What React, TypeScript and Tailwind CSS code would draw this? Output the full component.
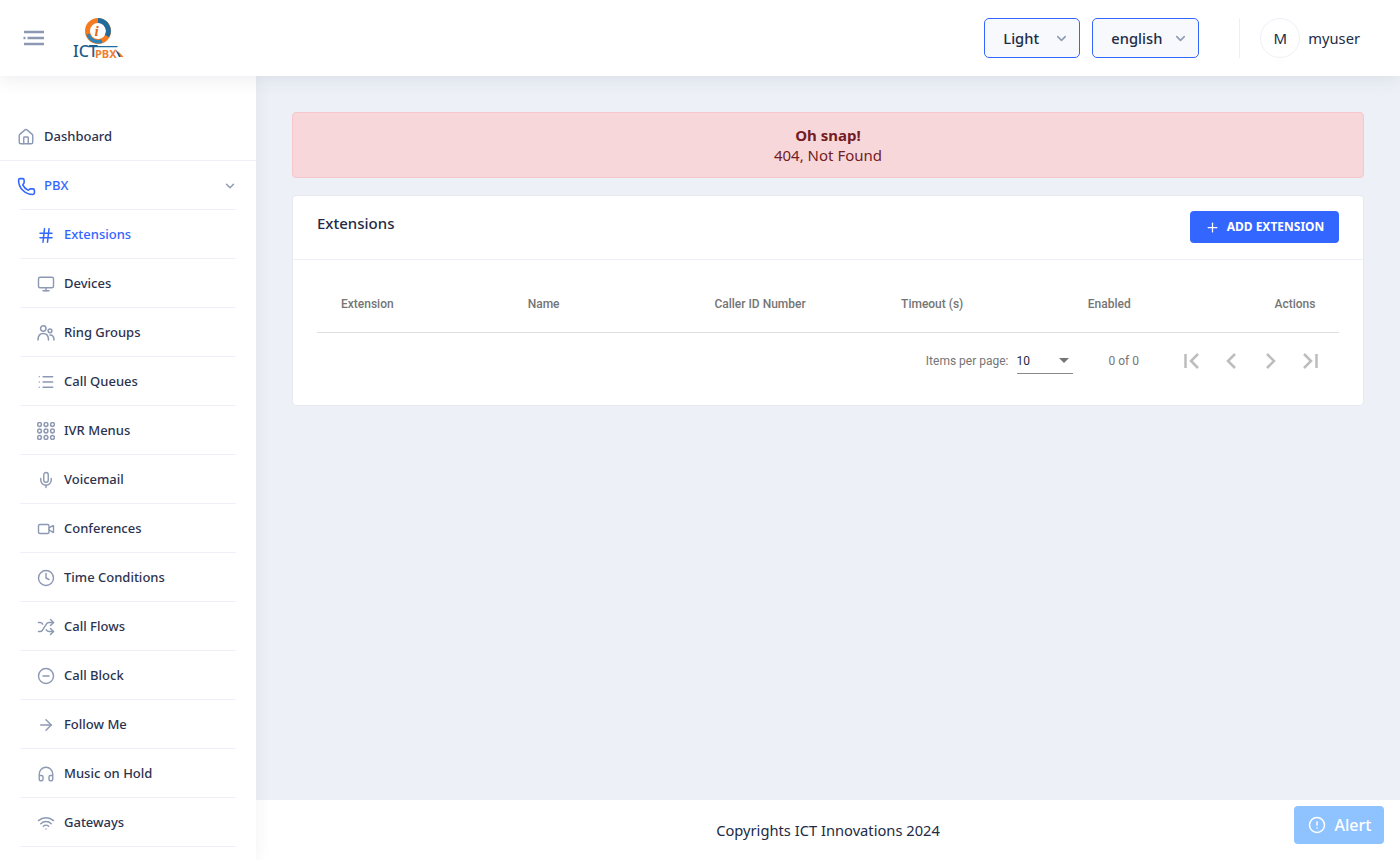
import React from "react";
import { House, Phone, ChevronDown, Hash, Monitor, List, Mic, Video, Clock, Shuffle, CircleMinus, ArrowRight, Headphones, Wifi, Plus, CircleAlert } from "lucide-react";

const Logo = () => (
  <div className="relative h-[44px] w-[52px]">
    <svg viewBox="0 0 52 44" width="52" height="44" className="absolute left-0 top-0">
      <circle cx="26" cy="15" r="10.500" fill="none" stroke="#f47b20" strokeWidth="5" />
      <path d="M26 4.500a10.500 10.500 0 0 1 9 15.500" fill="none" stroke="#1f6d9f" strokeWidth="5" />
      <path d="M16 18a10.500 10.500 0 0 0 14 7" fill="none" stroke="#2f83b5" strokeWidth="3.500" />
      <circle cx="26" cy="15" r="7.500" fill="#fff" />
      <path d="M16 30h30l-1 1.200H16z" fill="#1f6d9f" />
      <path d="M43 33l4 8h4z" fill="#1c4f7d" />
      <path d="M46 35l2.500 6h3z" fill="#f47b20" />
    </svg>
    <span className="absolute left-[22.500px] top-[7px] font-['Liberation_Serif',serif] text-[15px] font-bold italic leading-[16px] text-[#e2681a]">i</span>
    <span className="absolute left-[1px] top-[27px] font-['Noto_Sans',sans-serif] text-[16px] font-medium leading-[17px] text-[#1c5a8a]">ICT</span>
    <span className="absolute left-[23px] top-[32px] font-['Noto_Sans',sans-serif] text-[11px] font-bold leading-[12px] text-[#ef7d33]">PBX</span>
  </div>
);

const MenuIcon = () => (
  <svg width="22" height="16" viewBox="0 0 22 16" fill="none" stroke="#8d99b3" strokeWidth="2.400">
    <path d="M1 2h20M4.500 8h16.500M1 14h20" />
    <path d="M0.500 8h2" />
  </svg>
);

const UsersIcon = () => (
  <svg width="18" height="18" viewBox="0 0 18 18" fill="none" stroke="currentColor" strokeWidth="1.500" strokeLinecap="round">
    <circle cx="6.300" cy="4.500" r="2.700" />
    <circle cx="13" cy="6.800" r="1.900" />
    <path d="M1 16c0-4 2-6.500 5.300-6.500S11.500 12 11.500 16" />
    <path d="M13 11c2.500 0 4 2 4 5" />
  </svg>
);

const DotsIcon = () => (
  <svg width="18" height="18" viewBox="0 0 18 18" fill="none" stroke="currentColor" strokeWidth="1.500">
    {[2.500, 9, 15.500].map((y) =>
      [2.500, 9, 15.500].map((x) => <circle key={`${x}-${y}`} cx={x} cy={y} r="1.900" />)
    )}
  </svg>
);

const S = 1.900;

const items: [string, React.ReactNode][] = [
  ["Devices", <Monitor size={18} strokeWidth={S} />],
  ["Ring Groups", <UsersIcon />],
  ["Call Queues", <List size={18} strokeWidth={1.700} />],
  ["IVR Menus", <DotsIcon />],
  ["Voicemail", <Mic size={18} strokeWidth={S} />],
  ["Conferences", <Video size={18} strokeWidth={S} />],
  ["Time Conditions", <Clock size={18} strokeWidth={S} />],
  ["Call Flows", <Shuffle size={18} strokeWidth={S} />],
  ["Call Block", <CircleMinus size={18} strokeWidth={S} />],
  ["Follow Me", <ArrowRight size={18} strokeWidth={S} />],
  ["Music on Hold", <Headphones size={18} strokeWidth={S} />],
  ["Gateways", <Wifi size={18} strokeWidth={S} />],
];

const SubItem = ({ label, icon, active }: { label: string; icon: React.ReactNode; active?: boolean }) => (
  <div className={`flex h-[49px] shrink-0 items-center border-b border-[#edf0f8] pl-[17px] pt-[2px] ${active ? "text-[#3366ff]" : "text-[#2c3350]"}`}>
    <span className={`flex w-[18px] justify-center ${active ? "text-[#3366ff]" : "text-[#8d99b3]"}`}>{icon}</span>
    <span className="ml-[9px] text-[13px] font-[550]">{label}</span>
  </div>
);

const Select = ({ label, width }: { label: string; width: string }) => (
  <div className={`flex h-[40px] items-center justify-between rounded-[5px] border border-[#3366ff] bg-[#f7f9fc] pl-[18px] pr-[10px] ${width}`}>
    <span className="text-[14.700px] font-[550] text-[#222b45]">{label}</span>
    <ChevronDown size={15} strokeWidth={2.500} className="text-[#8f9bb3]" />
  </div>
);

const columns = ["Extension", "Name", "Caller ID Number", "Timeout (s)", "Enabled"];

export default function App() {
  return (
    <div className="flex h-[860px] w-[1400px] flex-col overflow-hidden bg-[#edf1f7] font-['Noto_Sans',sans-serif]">
      <header className="relative z-20 flex h-[76px] shrink-0 items-center bg-white pl-[23px] pr-[40px] shadow-[0_0_20px_rgba(44,51,73,0.12)]">
        <MenuIcon />
        <div className="ml-[27px]"><Logo /></div>
        <div className="ml-auto flex items-center">
          <Select label="Light" width="w-[96px]" />
          <div className="w-[12px]" />
          <Select label="english" width="w-[107px]" />
          <div className="ml-[40px] h-[40px] w-px bg-[#edf1f7]" />
          <div className="ml-[20px] flex h-[40px] w-[40px] items-center justify-center rounded-full border border-[#edf1f7] text-[15px] text-[#222b45]">M</div>
          <span className="ml-[8px] text-[14.700px] text-[#222b45]">myuser</span>
        </div>
      </header>
      <div className="flex min-h-0 flex-1">
        <aside className="relative z-10 flex w-[256px] shrink-0 flex-col overflow-hidden bg-white pt-[36px] shadow-[0_0_16px_rgba(44,51,73,0.07)]">
          <div className="flex h-[49px] shrink-0 items-center border-b border-[#edf1f7] pl-[17px] pt-[2px] text-[#2c3350]">
            <House size={18} strokeWidth={S} className="text-[#8d99b3]" />
            <span className="ml-[9px] text-[13px] font-[550]">Dashboard</span>
          </div>
          <div className="flex h-[48px] shrink-0 items-center pl-[17px] pr-[19px] pt-[2px] text-[#3366ff]">
            <Phone size={19} strokeWidth={2} />
            <span className="ml-[8px] text-[13px] font-[550]">PBX</span>
            <ChevronDown size={14} strokeWidth={2.500} className="ml-auto text-[#8f9bb3]" />
          </div>
          <div className="mx-[20px] flex flex-col border-t border-[#edf1f7]">
            <SubItem label="Extensions" icon={<Hash size={19} strokeWidth={2} />} active />
            {items.map(([label, icon]) => (
              <SubItem key={label} label={label} icon={icon} />
            ))}
          </div>
        </aside>
        <div className="flex min-w-0 flex-1 flex-col">
          <main className="flex min-h-0 flex-1 flex-col px-[36px] pt-[36px]">
            <div className="flex h-[66px] flex-col items-center justify-center rounded-[4px] border border-[#f5c6cb] bg-[#f8d7da] text-[15px] leading-[20px] text-[#721c24]">
              <strong className="font-bold">Oh snap!</strong>
              <span>404, Not Found</span>
            </div>
            <section className="mt-[17px] h-[211px] rounded-[4px] border border-[#e6e9f2] bg-white">
              <div className="flex h-[64px] items-start justify-between border-b border-[#edf1f7] px-[24px] pt-[15px]">
                <h2 className="text-[15px] font-[550] leading-[24px] text-[#222b45]">Extensions</h2>
                <button className="flex h-[32px] w-[149px] items-center justify-center rounded-[4px] bg-[#3366ff] text-[12px] font-bold text-white">
                  <Plus size={15} strokeWidth={2} className="mr-[7px]" />
                  ADD EXTENSION
                </button>
              </div>
              <div className="mx-[24px] font-['Roboto',sans-serif]">
                <div className="grid h-[73px] grid-cols-[repeat(5,186.7px)_1fr] items-center border-b border-[#dedede] px-[24px] pt-[16px] text-[12px] font-medium text-[#757575]">
                  {columns.map((c) => (
                    <span key={c}>{c}</span>
                  ))}
                  <span className="text-right">Actions</span>
                </div>
                <div className="flex h-[56px] items-center justify-end text-[12px] text-[#757575]">
                  <span>Items per page:</span>
                  <div className="ml-[8px] flex h-[25px] w-[56px] items-center justify-between border-b border-[#8a8a8a] pr-[4px] text-[#222b45]">
                    <span>10</span>
                    <span className="h-0 w-0 border-x-[5px] border-t-[5px] border-x-transparent border-t-[#757575]" />
                  </div>
                  <span className="ml-[36px]">0 of 0</span>
                  <div className="ml-[40px] mr-[16px] flex items-center gap-[16px] text-[#bdbdbd]">
                    {["M19 5l-7 7 7 7M6.500 5v14", "M16 5l-7 7 7 7", "M8 5l7 7-7 7", "M5 5l7 7-7 7M17.500 5v14"].map((d) => (
                      <svg key={d} width="24" height="24" viewBox="0 0 24 24" fill="none" stroke="currentColor" strokeWidth="2.500">
                        <path d={d} />
                      </svg>
                    ))}
                  </div>
                </div>
              </div>
            </section>
          </main>
          <footer className="relative flex h-[60px] shrink-0 items-center justify-center bg-white text-[14.700px] text-[#222b45]">
            Copyrights ICT Innovations 2024
            <button className="absolute right-[16px] top-[6px] flex h-[38px] w-[90px] items-center justify-center gap-[9px] rounded-[4px] bg-[#8fc3ff] pl-[1px] text-[16px] font-medium text-white">
              <CircleAlert size={18} strokeWidth={2} />
              Alert
            </button>
          </footer>
        </div>
      </div>
    </div>
  );
}
